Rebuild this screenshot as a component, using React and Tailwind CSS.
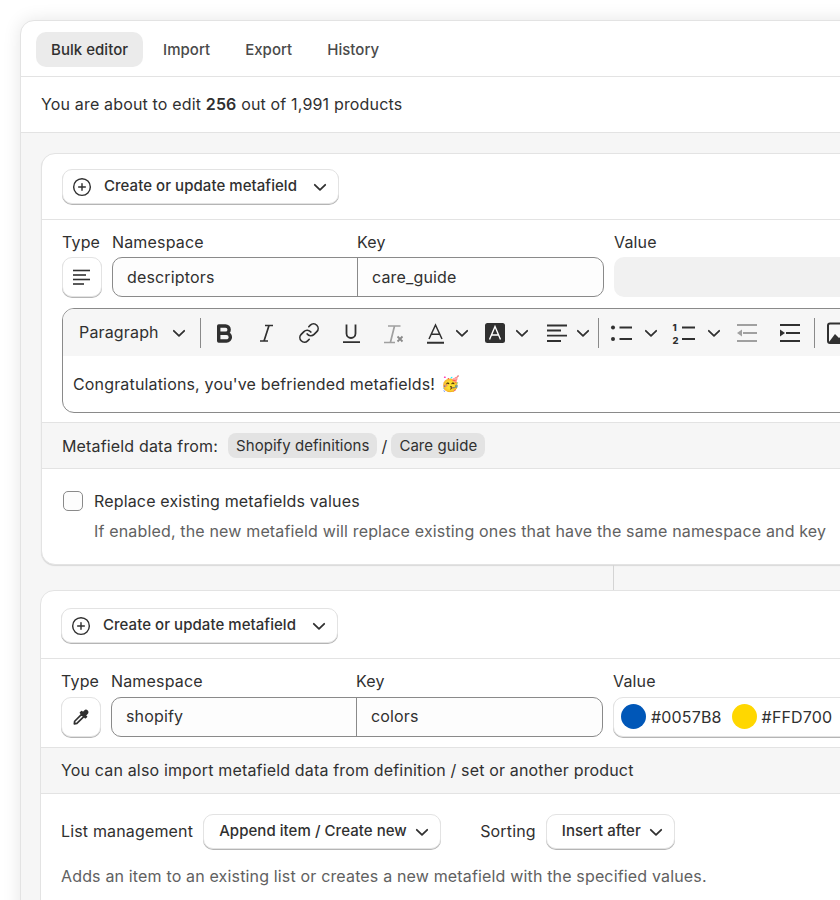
import React from 'react';
import { CirclePlus, Link } from 'lucide-react';

function Chevron({ className = '' }) {
  return (
    <svg width="16" height="16" viewBox="0 0 16 16" fill="none" stroke="#303030" strokeWidth="1.8" strokeLinecap="round" strokeLinejoin="round" className={className}>
      <path d="M2.8 5.8L8 10.8l5.2-5" />
    </svg>
  );
}

function Lines({ rows, color = '#303030', width = 1.8 }) {
  return (
    <svg width="24" height="24" viewBox="0 0 24 24" fill="none" stroke={color} strokeWidth={width}>
      {rows.map((r, i) => (
        <path key={i} d={`M${r[0]} ${r[2]}H${r[1]}`} />
      ))}
    </svg>
  );
}

function BoldIcon() {
  return (
    <svg width="24" height="24" viewBox="0 0 24 24" fill="none" stroke="#303030" strokeWidth="3.4" strokeLinejoin="round">
      <path d="M6.7 5h6.8a3.6 3.6 0 010 7.3H6.7zM6.7 12.3h7.8a3.8 3.8 0 010 7.7H6.7z" />
    </svg>
  );
}

function ItalicIcon() {
  return (
    <svg width="24" height="24" viewBox="0 0 24 24" fill="none" stroke="#303030" strokeWidth="1.7">
      <path d="M11 4.5h8M6 20h8M15 4.5L10 20" />
    </svg>
  );
}

function UnderlineIcon() {
  return (
    <svg width="24" height="24" viewBox="0 0 24 24" fill="none" stroke="#303030" strokeWidth="1.8">
      <path d="M7.5 3.5v9a4.5 4.5 0 009 0v-9" />
      <path d="M4 21.2h17" />
    </svg>
  );
}

function ClearFormat() {
  return (
    <svg width="24" height="24" viewBox="0 0 24 24" fill="none" stroke="#a0a0a0" strokeWidth="1.7">
      <path d="M7 5h12.5M13.5 5L9.5 21M3 21.5h11" />
      <path d="M16.5 15.5l5 5M21.5 15.5l-5 5" stroke="#8a8a8a" strokeWidth="1.8" />
    </svg>
  );
}

function TextColor() {
  return (
    <svg width="24" height="24" viewBox="0 0 24 24" fill="none" stroke="#303030" strokeWidth="1.5">
      <path d="M6 18L12.5 4 19 18M8.2 13.2h8.6" />
      <path d="M4 21.8h17" strokeWidth="2" />
    </svg>
  );
}

function HighlightColor() {
  return (
    <svg width="24" height="24" viewBox="0 0 24 24" fill="none">
      <rect x="2" y="2" width="20" height="20" rx="2.5" fill="#303030" />
      <path d="M6.5 18.5L12 5.5l5.5 13M8.4 14h7.2" stroke="#fff" strokeWidth="1.4" />
    </svg>
  );
}

function BulletList() {
  return (
    <svg width="24" height="24" viewBox="0 0 24 24" fill="none">
      <circle cx="3" cy="6.5" r="2" fill="#303030" />
      <circle cx="3" cy="18" r="2" fill="#303030" />
      <path d="M9.5 6.5H22M9.5 18H22" stroke="#303030" strokeWidth="2" />
    </svg>
  );
}

function NumberList() {
  return (
    <svg width="24" height="24" viewBox="0 0 24 24" fill="none">
      <text x="0.5" y="10" fontSize="9.5" fontWeight="800" fill="#303030" fontFamily="Inter, sans-serif">1</text>
      <text x="0.5" y="23" fontSize="9.5" fontWeight="800" fill="#303030" fontFamily="Inter, sans-serif">2</text>
      <path d="M10 6.5H23M10 18H23" stroke="#303030" strokeWidth="2" />
    </svg>
  );
}

function Indent({ out }) {
  const color = out ? '#a0a0a0' : '#303030';
  return (
    <svg width="24" height="24" viewBox="0 0 24 24" fill="none" stroke={color} strokeWidth="1.9">
      <path d="M2 4H22M8 12H22M2 20H22" />
      {out ? <path d="M7 8.5v7L2 12z" fill={color} stroke="none" /> : <path d="M2 8.5v7L7 12z" fill={color} stroke="none" />}
    </svg>
  );
}

function ImageIcon() {
  return (
    <svg width="24" height="24" viewBox="0 0 24 24" fill="none">
      <rect x="2" y="2.5" width="20" height="19.5" rx="2" stroke="#303030" strokeWidth="2" />
      <path d="M3 21l6-8 4 4 3-2 6 6z" fill="#303030" />
      <circle cx="16" cy="8.5" r="2" fill="#303030" />
    </svg>
  );
}

function Dropper() {
  return (
    <svg width="20" height="20" viewBox="0 0 18 18" fill="none" stroke="#303030" strokeWidth="1.5" strokeLinejoin="round">
      <path d="M3 15.2l.3-2.4 6.2-6.2 2 2-6.2 6.2z" />
      <path d="M8.5 5.2l4.4 4.4 1-1-1-1.2 1.6-1.6a1.5 1.5 0 00-2.1-2.2l-1.6 1.6-1.2-1z" fill="#303030" />
    </svg>
  );
}

function Tabs() {
  return (
    <div className="flex items-center gap-[5px] h-[56px] pt-[2px] pl-[15px] border-b border-[#e3e3e3] text-[15px] font-medium tracking-[0.03px] text-[#4a4a4a]">
      <div className="h-[35px] px-[15px] pt-[2px] flex items-center rounded-[10px] bg-[#ebebeb] text-[#303030]">Bulk editor</div>
      <div className="h-[35px] px-[15px] pt-[2px] flex items-center">Import</div>
      <div className="h-[35px] px-[15px] pt-[2px] flex items-center">Export</div>
      <div className="h-[35px] px-[15px] pt-[2px] flex items-center">History</div>
    </div>
  );
}

function ActionButton() {
  return (
    <div className="w-[277px] h-[35px] flex items-center pl-[9px] rounded-[10px] border border-[#e3e3e3] bg-white shadow-[0_1px_0_#b5b5b5] text-[15px] font-medium tracking-[0.05px] text-[#303030]">
      <CirclePlus size={20} strokeWidth={1.7} color="#303030" />
      <span className="ml-[12px]">Create or update metafield</span>
      <Chevron className="ml-[15px]" />
    </div>
  );
}

function Select({ label, width }) {
  return (
    <div className={`${width} h-[35px] flex items-center pl-[15px] gap-[7px] rounded-[10px] border border-[#e3e3e3] bg-white shadow-[0_1px_0_#b5b5b5] text-[15px] font-medium tracking-[0.05px] text-[#303030]`}>
      <span>{label}</span>
      <Chevron />
    </div>
  );
}

function FieldRow({ icon, namespace, fieldKey, value, gap = 'mt-[5px]', textPad = '' }) {
  return (
    <div>
      <div className="flex text-[16px] leading-[20px] text-[#303030]">
        <span className="w-[50px]">Type</span>
        <span className="w-[245px]">Namespace</span>
        <span className="w-[257px]">Key</span>
        <span>Value</span>
      </div>
      <div className={`flex ${gap} text-[16px] text-[#303030]`}>
        <div className="w-[40px] h-[40px] shrink-0 flex items-center justify-center rounded-[10px] border border-[#e3e3e3] bg-white shadow-[0_1px_0_#b5b5b5]">
          {icon}
        </div>
        <div className="ml-[10px] w-[492px] h-[40px] shrink-0 flex rounded-[10px] border border-[#8a8a8a] bg-[#fdfdfd]">
          <div className={`w-[245px] pl-[14px] flex items-center border-r border-[#8a8a8a] ${textPad}`}>{namespace}</div>
          <div className={`pl-[14px] flex items-center ${textPad}`}>{fieldKey}</div>
        </div>
        <div className="ml-[10px] w-[300px]">{value}</div>
      </div>
    </div>
  );
}

function ToolCell({ width, children }) {
  return <div className={`${width} shrink-0 flex items-center justify-center`}>{children}</div>;
}

function Split({ width, pad = 'pl-[9px]', gap = 'ml-[7px]', children }) {
  return (
    <div className={`${width} ${pad} shrink-0 flex items-center`}>
      {children}
      <Chevron className={gap} />
    </div>
  );
}

function Divider() {
  return <div className="w-px h-[30px] shrink-0 bg-[#8a8a8a]" />;
}

function Editor() {
  return (
    <div className="mt-[11px] w-[850px] h-[105px] rounded-[12px] border border-[#8a8a8a] bg-white overflow-hidden">
      <div className="h-[47px] flex items-center bg-[#f6f6f6]">
        <div className="w-[137px] shrink-0 flex items-center pl-[16px] text-[16px] text-[#303030]">
          <span className="-mt-[2px]">Paragraph</span>
          <Chevron className="ml-[12px]" />
        </div>
        <Divider />
        <div className="w-[2px] shrink-0" />
        <ToolCell width="w-[42px]"><BoldIcon /></ToolCell>
        <ToolCell width="w-[42px]"><ItalicIcon /></ToolCell>
        <ToolCell width="w-[43px]"><Link size={22} strokeWidth={1.8} color="#303030" /></ToolCell>
        <ToolCell width="w-[42px]"><UnderlineIcon /></ToolCell>
        <ToolCell width="w-[42px]"><ClearFormat /></ToolCell>
        <Split width="w-[60px]"><TextColor /></Split>
        <Split width="w-[61px]"><HighlightColor /></Split>
        <Split width="w-[63px]">
          <Lines rows={[[3, 23, 4.5], [3, 17, 9.5], [3, 23, 14.7], [3, 17, 20]]} />
        </Split>
        <Divider />
        <Split width="w-[62px]" pad="pl-[11px]" gap="ml-[9px]"><BulletList /></Split>
        <Split width="w-[65px]" pad="pl-[11px]" gap="ml-[10px]"><NumberList /></Split>
        <ToolCell width="w-[42px]"><Indent out /></ToolCell>
        <ToolCell width="w-[43px]"><Indent /></ToolCell>
        <div className="w-[3px] shrink-0" />
        <Divider />
        <ToolCell width="w-[46px]"><ImageIcon /></ToolCell>
      </div>
      <div className="h-[56px] flex items-center gap-[6px] pl-[10px] text-[16px] text-[#303030]">
        <span>Congratulations, you've befriended metafields!</span>
        <span className="text-[15px]">🥳</span>
      </div>
    </div>
  );
}

function Chip({ children }) {
  return <span className="h-[25px] flex items-center pt-[2px] px-[8px] rounded-[8px] bg-[#e3e3e3] text-[15px] tracking-[0.05px] text-[#303030]">{children}</span>;
}

function App() {
  return (
    <div className="w-[840px] h-[900px] overflow-hidden bg-white pt-5 pl-5 tracking-[0.16px] font-['Inter',sans-serif]">
      <div className="w-[1000px] rounded-tl-[14px] border border-[#e3e3e3] bg-white shadow-[0_0_18px_rgba(0,0,0,0.1)]">
        <Tabs />
        <div className="h-[56px] flex items-center pb-[2px] pl-[20px] border-b border-[#e3e3e3] text-[16px] text-[#303030]">
          <span>You are about to edit <b className="font-semibold">256</b> out of 1,991 products</span>
        </div>

        <div className="bg-[#f6f6f6] pt-[20px] pl-[20px] pb-[100px]">
          {/* first metafield */}
          <div className="rounded-[14px] border border-[#e3e3e3] bg-white shadow-[0_1px_1px_rgba(0,0,0,0.12)] h-[412px]">
            <div className="h-[66px] pt-[15px] pl-[20px] border-b border-[#e3e3e3]">
              <ActionButton />
            </div>
            <div className="h-[202px] pt-[12px] pl-[20px]">
              <FieldRow
                icon={<Lines rows={[[3, 20, 5.5], [3, 16, 10], [3, 20, 14.5], [3, 14, 19]]} width={1.6} />}
                namespace="descriptors"
                fieldKey="care_guide"
                value={<div className="h-[40px] rounded-[10px] bg-[#f1f1f1]" />}
              />
              <Editor />
            </div>
            <div className="h-[47px] flex items-center pl-[20px] gap-[4px] border-y border-[#e3e3e3] bg-[#f6f6f6] text-[16px] text-[#303030]">
              <span className="mr-[6px]">Metafield data from:</span>
              <Chip>Shopify definitions</Chip>
              <span>/</span>
              <Chip>Care guide</Chip>
            </div>
            <div className="pt-[20px] pl-[21px]">
              <div className="flex items-center gap-[11px] text-[16px] text-[#303030]">
                <div className="w-[20px] h-[20px] rounded-[5px] border border-[#8a8a8a] bg-[#fdfdfd]" />
                <span>Replace existing metafields values</span>
              </div>
              <p className="mt-[6px] ml-[31px] text-[16px] text-[#616161]">If enabled, the new metafield will replace existing ones that have the same namespace and key</p>
            </div>
          </div>

          <div className="h-[25px] w-px ml-[572px] bg-[#d4d4d4]" />

          {/* second metafield */}
          <div className="-ml-px rounded-t-[14px] border border-[#e3e3e3] bg-white h-[400px]">
            <div className="h-[68px] pt-[17px] pl-[20px] border-b border-[#e3e3e3]">
              <ActionButton />
            </div>
            <div className="h-[88px] pt-[12px] pl-[20px]">
              <FieldRow
                icon={<Dropper />}
                namespace="shopify"
                fieldKey="colors"
                gap="mt-[6px]"
                textPad="pb-[2px]"
                value={
                  <div className="h-[40px] flex items-center pb-[1px] pl-[7px] rounded-[10px] border border-[#e3e3e3] bg-white shadow-[0_1px_0_#b5b5b5]">
                    <span className="w-[25px] h-[25px] rounded-full bg-[#0057b8]" />
                    <span className="ml-[5px]">#0057B8</span>
                    <span className="ml-[10px] w-[25px] h-[25px] rounded-full bg-[#ffd700]" />
                    <span className="ml-[5px]">#FFD700</span>
                  </div>
                }
              />
            </div>
            <div className="h-[47px] flex items-center pb-[2px] pl-[20px] border-y border-[#e3e3e3] bg-[#f6f6f6] text-[16px] text-[#303030]">
              You can also import metafield data from definition / set or another product
            </div>
            <div className="pt-[20px] pl-[20px]">
              <div className="flex items-center text-[16px] text-[#303030]">
                <span className="-mt-[2px]">List management</span>
                <div className="ml-[10px]"><Select label="Append item / Create new" width="w-[238px]" /></div>
                <span className="ml-[39px] -mt-[2px]">Sorting</span>
                <div className="ml-[10px]"><Select label="Insert after" width="w-[129px]" /></div>
              </div>
              <p className="mt-[15px] text-[16px] text-[#616161]">Adds an item to an existing list or creates a new metafield with the specified values.</p>
            </div>
          </div>
        </div>
      </div>
    </div>
  );
}

export default App;
